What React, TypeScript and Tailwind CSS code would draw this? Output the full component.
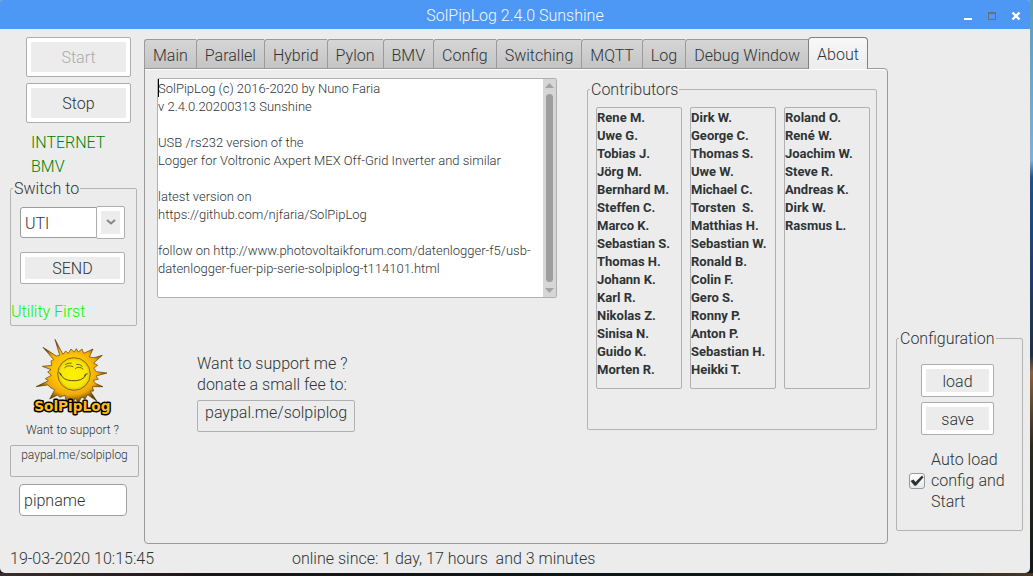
import { useState } from 'react';
import type { ReactNode } from 'react';

const TABS = ['Main', 'Parallel', 'Hybrid', 'Pylon', 'BMV', 'Config', 'Switching', 'MQTT', 'Log', 'Debug Window', 'About'];

const CONTRIBUTORS = [
  ['Rene M.', 'Uwe G.', 'Tobias J.', 'Jörg M.', 'Bernhard M.', 'Steffen C.', 'Marco K.', 'Sebastian S.', 'Thomas H.', 'Johann K.', 'Karl R.', 'Nikolas Z.', 'Sinisa N.', 'Guido K.', 'Morten R.'],
  ['Dirk W.', 'George C.', 'Thomas S.', 'Uwe W.', 'Michael C.', 'Torsten  S.', 'Matthias H.', 'Sebastian W.', 'Ronald B.', 'Colin F.', 'Gero S.', 'Ronny P.', 'Anton P.', 'Sebastian H.', 'Heikki T.'],
  ['Roland O.', 'René W.', 'Joachim W.', 'Steve R.', 'Andreas K.', 'Dirk W.', 'Rasmus L.'],
];

const ABOUT_TEXT = `SolPipLog (c) 2016-2020 by Nuno Faria
v 2.4.0.20200313 Sunshine

USB /rs232 version of the
Logger for Voltronic Axpert MEX Off-Grid Inverter and similar

latest version on
https://github.com/njfaria/SolPipLog

follow on http://www.photovoltaikforum.com/datenlogger-f5/usb-datenlogger-fuer-pip-serie-solpiplog-t114101.html`;

function PushButton({ children, className = '', disabled = false }: { children: ReactNode; className?: string; disabled?: boolean }) {
  return (
    <button
      type="button"
      disabled={disabled}
      className={`flex items-center justify-center rounded-[2px] border border-[#aeaeae] bg-[#ececec] pt-0.5 shadow-[inset_0_0_0_4px_#ffffff] disabled:text-[#a9abac] ${className}`}
    >
      {children}
    </button>
  );
}

function Frame({ title, className = '', children }: { title: string; className?: string; children: ReactNode }) {
  return (
    <fieldset className={`min-w-0 rounded-[2px] border border-[#b4b4b4] ${className}`}>
      <legend className="ml-0.5 px-px leading-[21px]">{title}</legend>
      {children}
    </fieldset>
  );
}

function SunLogo() {
  return (
    <svg viewBox="0 0 300 255" className="-mt-px h-[85px] w-[100px]" role="img" aria-label="SolPipLog">
      <defs>
        <radialGradient id="rays">
          <stop offset="0.5" stopColor="#ffc400" />
          <stop offset="0.75" stopColor="#f0a808" />
          <stop offset="1" stopColor="#5b3f08" />
        </radialGradient>
        <radialGradient id="face">
          <stop offset="0" stopColor="#fff200" />
          <stop offset="0.8" stopColor="#f6e60a" />
          <stop offset="1" stopColor="#ddc414" />
        </radialGradient>
      </defs>
      <path
        d="M90 13 L108 47 L114 58 L122 48 L130 55 L138 42 L148 51 L154 41 L160 51 L171 42 L176 55 L204 42 L193 66 L207 68 L232 61 L206 84 L218 91 L206 99 L214 110 L246 114 L213 123 L220 133 L205 136 L211 145 L234 155 L202 155 L206 168 L196 169 L216 199 L188 179 L180 192 L170 186 L160 204 L151 190 L144 204 L134 190 L124 203 L120 181 L104 187 L98 180 L74 192 L89 164 L78 159 L68 150 L33 155 L70 137 L61 131 L79 121 L68 111 L78 104 L52 94 L80 91 L78 78 L86 74 L54 37 L94 63 L104 61 L90 13 Z"
        fill="url(#rays)"
        stroke="#5b3f0a"
        strokeWidth="2"
      />
      <circle cx="147" cy="117" r="49" fill="url(#face)" stroke="#8c6a14" strokeWidth="3" />
      <path d="M102 113 q8 2 7 8 M105 116 q10 20 34 21 q34 3 44 -17 M178 124 q0 -8 9 -8" fill="none" stroke="#5f4b0b" strokeWidth="3" strokeLinecap="round" />
      <path d="M119 98 q10 -10 25 -3 M151 101 q10 -10 23 1 M121 89 q7 -6 18 -5 M155 88 q10 -2 17 6" fill="none" stroke="#7b6514" strokeWidth="3" strokeLinecap="round" />
      <text
        x="142"
        y="228"
        textAnchor="middle"
        fill="#fcbb18"
        stroke="#000000"
        strokeWidth="9"
        strokeLinejoin="round"
        paintOrder="stroke"
        className="font-['DejaVu_Sans'] text-[41px] font-bold"
      >
        SolPipLog
      </text>
    </svg>
  );
}

function TitleBar() {
  return (
    <header className="grid h-[29px] shrink-0 grid-cols-[1fr_auto_1fr] items-center rounded-t-[3px] bg-[#4d97f5] pt-0.5 text-[#f4f8ff]">
      <h1 className="col-start-2 leading-[21px]">SolPipLog 2.4.0 Sunshine</h1>
      <div className="flex justify-end gap-2 pr-1.5">
        <button type="button" aria-label="Minimize" className="size-4">
          <svg viewBox="0 0 16 16" className="size-4"><path d="M4 10h8v2H4z" fill="#fff" /></svg>
        </button>
        <button type="button" aria-label="Maximize" className="size-4">
          <svg viewBox="0 0 16 16" className="size-4"><path d="M4 4h8v8H4zM5 6v5h6V6z" fill="#6b6f77" fillRule="evenodd" /></svg>
        </button>
        <button type="button" aria-label="Close" className="size-4">
          <svg viewBox="0 0 16 16" className="size-4"><path d="M4.500 4.500l7 7M11.500 4.500l-7 7" fill="none" stroke="#fff" strokeWidth="2.400" /></svg>
        </button>
      </div>
    </header>
  );
}

function Sidebar() {
  return (
    <aside className="flex w-36 shrink-0 flex-col pl-2.5 pt-2">
      <div className="flex flex-col gap-1.5 pl-4">
        <PushButton disabled className="h-10 w-[105px]">Start</PushButton>
        <PushButton className="h-10 w-[105px]">Stop</PushButton>
      </div>
      <div className="pb-px pl-[21px] pt-2 leading-6 text-[#008000]">
        <p>INTERNET</p>
        <p>BMV</p>
      </div>
      <Frame title="Switch to" className="-mt-0.5 w-[127px]">
        <div className="flex flex-col pl-[9px] pr-[11px] pt-[7px]">
          <div className="relative h-[33px]">
            <select aria-label="Switch to" defaultValue="UTI" className="mt-px h-[31px] w-[77px] appearance-none rounded-l-[3px] border border-[#9c9c9c] bg-white pl-1 pt-0.5">
              <option>UTI</option>
              <option>SBU</option>
            </select>
            <span className="pointer-events-none absolute right-0 top-0 flex h-[33px] w-[29px] items-center justify-center rounded-[2px] border border-[#aeaeae] bg-[#ececec] shadow-[inset_0_0_0_4px_#ffffff]">
              <svg viewBox="0 0 12 8" className="-mt-0.5 h-2 w-3"><path d="M2 2l4 3.500L10 2" fill="none" stroke="#858585" strokeWidth="2" /></svg>
            </span>
          </div>
          <PushButton className="mt-[13px] h-8">SEND</PushButton>
        </div>
        <p className="mt-[17px] pb-[3px] leading-[21px] text-[#00f800]">Utility First</p>
      </Frame>
      <div className="mt-2.5 pl-[15px]">
        <SunLogo />
      </div>
      <p className="pl-4 pt-px text-[12px] leading-[18px]">Want to support ?</p>
      <button type="button" className="mt-1.5 flex h-8 w-[129px] justify-center rounded-[2px] border border-[#b0b0b0] text-[12px] leading-[18px]">paypal.me/solpiplog</button>
      <input aria-label="Name" defaultValue="pipname" className="ml-[9px] mt-[7px] h-8 w-[108px] rounded-[4px] border border-[#a0a0a0] bg-white px-1 pt-px" />
    </aside>
  );
}

function AboutPanel() {
  return (
    <div role="tabpanel" className="grid grow grid-cols-[400fr_290fr] gap-x-[30px] rounded-b-[4px] rounded-tr-[4px] border border-[#9a9a9a] pl-3 pr-2.5 pt-[9px] shadow-[inset_0_1px_0_#ffffff]">
      <div>
        <div className="relative flex h-[220px] rounded-[2px] border border-[#b0b0b0] bg-white">
          <textarea readOnly aria-label="About" value={ABOUT_TEXT} className="grow resize-none overflow-hidden pt-px text-[13px] leading-[18px]" />
          <span className="absolute left-0 top-0 h-[18px] w-px bg-black" />
          <div className="flex w-[13px] shrink-0 flex-col items-center bg-[#d6d6d6] py-1">
            <svg viewBox="0 0 9 5" className="h-[5px] w-[9px]"><path d="M0 5l4.500-5L9 5z" fill="#a3a3a3" /></svg>
            <div className="my-1.5 w-[7px] grow rounded-full bg-[#9e9e9e]" />
            <svg viewBox="0 0 9 5" className="h-[5px] w-[9px]"><path d="M0 0l4.500 5L9 0z" fill="#a3a3a3" /></svg>
          </div>
        </div>
        <div className="mt-[55px] pl-10 leading-[21px]">
          <p>Want to support me ?</p>
          <p>donate a small fee to:</p>
          <button type="button" className="mt-[5px] flex h-8 rounded-[2px] border border-[#b0b0b0] px-[7px] leading-6">paypal.me/solpiplog</button>
        </div>
      </div>
      <Frame title="Contributors" className="mt-px h-[351px]">
        <div className="grid grid-cols-3 gap-x-2 pl-2 pr-1.5 pt-[7px]">
          {CONTRIBUTORS.map((names, column) => (
            <ul key={column} className="h-[282px] whitespace-pre rounded-[2px] border border-[#b0b0b0] pt-px text-[13px] font-bold leading-[18px]">
              {names.map((name) => (
                <li key={name}>{name}</li>
              ))}
            </ul>
          ))}
        </div>
      </Frame>
    </div>
  );
}

function Notebook() {
  const [active, setActive] = useState('About');
  return (
    <main className="flex min-w-0 grow flex-col pt-2">
      <div role="tablist" className="z-10 -mb-px flex items-end">
        {TABS.map((tab) => (
          <button
            key={tab}
            type="button"
            role="tab"
            aria-selected={tab === active}
            onClick={() => setActive(tab)}
            className={
              tab === active
                ? 'h-8 rounded-t-[4px] border border-b-0 border-[#808080] bg-linear-to-b from-[#f8f8f8] to-[#ececec] px-2 pt-0.5'
                : 'h-[30px] rounded-tl-[3px] border border-r-0 border-[#9a9a9a] bg-linear-to-b from-[#d6d6d6] to-[#c4c4c4] px-2 pt-[3px]'
            }
          >
            {tab}
          </button>
        ))}
      </div>
      <AboutPanel />
    </main>
  );
}

function Configuration() {
  const [auto, setAuto] = useState(true);
  return (
    <aside className="flex w-[142px] shrink-0 flex-col justify-end pb-[13px] pl-2 pr-[7px]">
      <Frame title="Configuration" className="h-[203px]">
        <div className="flex flex-col items-center gap-[5px] pr-1 pt-[15px]">
          <PushButton className="h-[33px] w-[73px]">load</PushButton>
          <PushButton className="h-[33px] w-[73px]">save</PushButton>
        </div>
        <label className="mt-[14px] flex items-center gap-1.5 pl-3 leading-[21px]">
          <span className="relative size-4 shrink-0">
            <input
              type="checkbox"
              checked={auto}
              onChange={(e) => setAuto(e.target.checked)}
              className="block size-4 appearance-none rounded-[3px] border border-[#999999] bg-linear-to-b from-white to-[#e8e8e8]"
            />
            {auto && (
              <svg viewBox="0 0 16 16" className="pointer-events-none absolute inset-0 size-4">
                <path d="M1.500 8l3-1.500L6.500 9 13 2.500l1.500 1.800L7 12.800H5.500z" fill="#2b3133" />
              </svg>
            )}
          </span>
          <span>Auto load config and Start</span>
        </label>
      </Frame>
    </aside>
  );
}

export default function App() {
  return (
    <div className="flex min-h-screen flex-col bg-[linear-gradient(90deg,#3a2d2c_0%,#1c1518_20%,#0d1519_50%,#0d1718_85%,#4a3a28_100%)] pb-[3px] font-[Roboto,'Liberation_Sans',sans-serif] text-base font-light text-[#2e3436]">
      <div className="flex grow flex-col bg-[linear-gradient(180deg,#5a9cc0_0%,#7fb0d0_28%,#22508a_31%,#1f3048_62%,#8a5f3c_65%,#2a2a20_78%,#121a1a_100%)] pr-[3px]">
        <div className="flex grow flex-col rounded-b-[5px] rounded-t-[3px] bg-[#ececec]">
          <TitleBar />
          <div className="flex grow">
            <Sidebar />
            <Notebook />
            <Configuration />
          </div>
          <footer className="flex h-[29px] shrink-0 items-center pl-2.5 leading-[21px]">
            <time className="w-[282px]">19-03-2020 10:15:45</time>
            <p className="whitespace-pre">online since: 1 day, 17 hours  and 3 minutes</p>
          </footer>
        </div>
      </div>
    </div>
  );
}
